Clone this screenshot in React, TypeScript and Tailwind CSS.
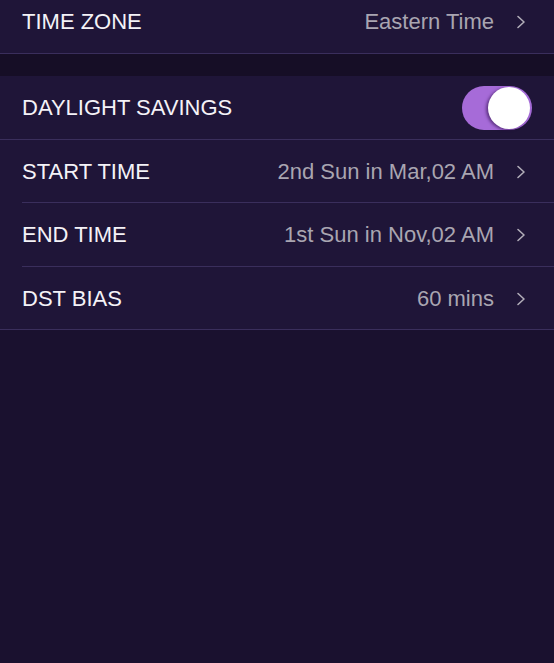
import React from "react";

const Chevron = () => (
  <svg width="10" height="14" viewBox="0 0 10 14" className="ml-[22px] shrink-0">
    <path d="M2 1.5 L8 7 L2 12.5" fill="none" stroke="#b1adb8" strokeWidth="1.6" strokeLinecap="round" strokeLinejoin="round" />
  </svg>
);

function Row({
  label,
  value,
  h,
  inset,
  extraClass = "",
}: {
  label: string;
  value?: string;
  h: string;
  inset?: boolean;
  extraClass?: string;
}) {
  return (
    <div className={`bg-[#1f1538] ${extraClass}`}>
      <div className={`flex items-center pl-[22px] pr-[28px] pt-px ${h}`}>
        <span className="text-[22px] leading-none text-[#f4f2f7]">{label}</span>
        <div className="flex-1" />
        {value && <span className="text-[22px] leading-none text-[#a9a5b1]">{value}</span>}
        <Chevron />
      </div>
      <div className={inset ? "ml-[22px] h-px bg-[#3a2e5c]" : "h-px bg-[#3a2e5c]"} />
    </div>
  );
}

export default function App() {
  return (
    <div
      className="w-[554px] h-[663px] overflow-hidden bg-[#1a112f] flex flex-col"
      style={{ fontFamily: '"Liberation Sans", Arial, sans-serif' }}
    >
      <Row label="TIME ZONE" value="Eastern Time" h="h-[63px]" extraClass="-mt-[10px]" />
      <div className="h-[22px] bg-[#160e26]" />
      <div className="bg-[#1f1538]">
        <div className="flex items-center pl-[22px] pr-[22px] h-[63px]">
          <span className="text-[22px] leading-none pt-px text-[#f4f2f7]">DAYLIGHT SAVINGS</span>
          <div className="flex-1" />
          <div className="relative w-[70px] h-[44px] rounded-full bg-[#a66bd8]">
            <div className="absolute right-[2px] top-[1px] w-[42px] h-[42px] rounded-full bg-white shadow-[-2px_1px_3px_rgba(40,10,70,0.55)]" />
          </div>
        </div>
        <div className="h-px bg-[#3a2e5c]" />
      </div>
      <Row label="START TIME" value="2nd Sun in Mar,02 AM" h="h-[62px]" inset />
      <Row label="END TIME" value="1st Sun in Nov,02 AM" h="h-[63px]" inset />
      <Row label="DST BIAS" value="60 mins" h="h-[62px]" />
    </div>
  );
}
